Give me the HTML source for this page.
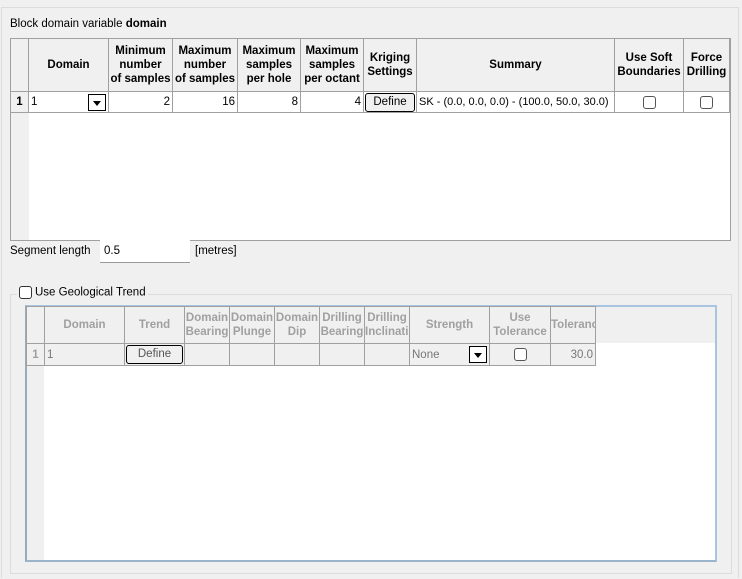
<!DOCTYPE html>
<html style="overflow:hidden;height:579px"><head><style>
*{box-sizing:border-box;margin:0;padding:0}
body{width:742px;height:579px;background:#f0f0f0;font-family:"Liberation Sans",sans-serif;font-size:11.5px;color:#000;position:relative;overflow:hidden}
.a{position:absolute}
table{border-collapse:collapse;table-layout:fixed}
.g td,.g th{border:1px solid #a0a0a0;overflow:hidden;white-space:nowrap}
.g th{font-weight:bold;text-align:center;line-height:14px;font-size:11.5px;background:#f0f0f0}
.cb{display:inline-block;width:13px;height:13px;border:1px solid #333;border-radius:3px;background:#fff;vertical-align:middle}
.btn{display:block;border:1px solid #000;border-radius:3px;text-align:center;height:19px;line-height:17px;margin:0 1px;background:#f0f0f0}
.dd{position:absolute;right:2px;top:2px;width:18px;height:17px;border:1px solid #000;background:#fff}
.dd:after{content:"";position:absolute;left:4px;top:6px;border-left:4px solid transparent;border-right:4px solid transparent;border-top:5px solid #000}
.h{color:#a0a0a0}
</style></head><body>
<div class="a" style="left:1px;top:7px;width:738px;height:571px;border:1px solid #dcdcdc;border-bottom:none"></div>
<div class="a" style="left:10px;top:18px">Block domain variable <b>domain</b></div>
<div class="a" style="left:10px;top:38px;width:721px;height:203px;background:#fff;border:1px solid #a0a0a0">
<div class="a" style="left:0;top:0;width:18px;height:201px;background:#f0f0f0"></div>
<table class="g a" style="left:-1px;top:-1px;width:719px">
<tr style="height:53px"><th style="width:18px"></th><th style="width:80px">Domain</th><th style="width:64px">Minimum<br>number<br>of samples</th><th style="width:65px">Maximum<br>number<br>of samples</th><th style="width:63px">Maximum<br>samples<br>per hole</th><th style="width:63px">Maximum<br>samples<br>per octant</th><th style="width:53px">Kriging<br>Settings</th><th style="width:198px">Summary</th><th style="width:69px">Use Soft<br>Boundaries</th><th style="width:46px">Force<br>Drilling</th></tr>
<tr style="height:21px;background:#fff"><th style="background:#f0f0f0">1</th><td style="position:relative;padding-left:2px">1<span class="dd"></span></td><td style="text-align:right;padding-right:2px">2</td><td style="text-align:right;padding-right:2px">16</td><td style="text-align:right;padding-right:2px">8</td><td style="text-align:right;padding-right:2px">4</td><td><span class="btn">Define</span></td><td style="padding-left:2px;font-size:11px">SK - (0.0, 0.0, 0.0) - (100.0, 50.0, 30.0)</td><td style="text-align:center"><span class="cb" style="border-color:#555"></span></td><td style="text-align:center"><span class="cb" style="border-color:#555"></span></td></tr>
</table></div>
<div class="a" style="left:10px;top:245px">Segment length</div>
<div class="a" style="left:100px;top:240px;width:90px;height:23px;background:#fff;border-bottom:1px solid #999;padding:5px 4px">0.5</div>
<div class="a" style="left:195px;top:245px">[metres]</div>
<div class="a" style="left:10px;top:294px;width:722px;height:280px;border:1px solid #dcdcdc"></div>
<div class="a" style="left:17px;top:286px;padding:0 2px;background:#f0f0f0;height:16px"><span class="cb" style="margin-right:3px"></span>Use Geological Trend</div>
<div class="a" style="left:25px;top:305px;width:692px;height:257px;background:#fff;border:2px solid #a8c4e0;border-left-color:#9ab;border-bottom-color:#9ab4cc">
<div class="a" style="left:0;top:0;width:688px;height:36px;background:#f0f0f0"></div>
<div class="a" style="left:0;top:0;width:17px;height:253px;background:#f0f0f0"></div>
<table class="g a" style="left:-1px;top:-1px;width:569px">
<tr style="height:37px"><th style="width:18px"></th><th class="h" style="width:80px">Domain</th><th class="h" style="width:60px">Trend</th><th class="h" style="width:45px">Domain<br>Bearing</th><th class="h" style="width:45px">Domain<br>Plunge</th><th class="h" style="width:45px">Domain<br>Dip</th><th class="h" style="width:45px">Drilling<br>Bearing</th><th class="h" style="width:45px">Drilling<br>Inclination</th><th class="h" style="width:80px">Strength</th><th class="h" style="width:61px">Use<br>Tolerance</th><th class="h" style="width:45px">Tolerance</th></tr>
<tr style="height:22px;background:#f0f0f0;color:#777"><th class="h">1</th><td style="padding-left:2px">1</td><td><span class="btn" style="color:#555">Define</span></td><td></td><td></td><td></td><td></td><td></td><td style="position:relative;padding-left:2px">None<span class="dd"></span></td><td style="text-align:center"><span class="cb" style="border-color:#555"></span></td><td style="text-align:right;padding-right:2px">30.0</td></tr>
</table></div>
</body></html>
